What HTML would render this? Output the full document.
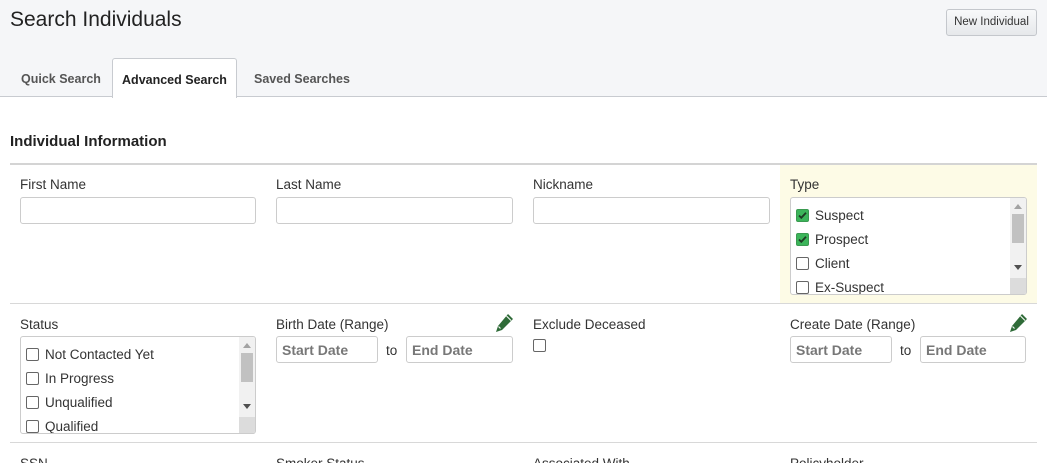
<!DOCTYPE html>
<html><head><meta charset="utf-8"><style>
*{box-sizing:border-box;margin:0;padding:0}
html,body{width:1047px;height:463px;overflow:hidden}
body{background:#fff;font-family:"Liberation Sans",sans-serif;color:#222;position:relative}
.a{position:absolute}
.hdr{left:0;top:0;width:1047px;height:97px;background:#f5f6f8;border-bottom:1px solid #c8cbd0}
h1{position:absolute;left:10px;top:8px;font-size:21px;font-weight:normal;color:#222}
.btn{left:946px;top:9px;width:91px;height:27px;border:1px solid #c4c7cc;border-radius:3px;background:linear-gradient(#f8f9fa,#e6e8eb);font-size:11.5px;color:#333;text-align:center;line-height:25px}
.tab{top:58px;height:40px;font-size:12.5px;font-weight:bold;color:#555;line-height:42px}
.tab.act{background:#fff;border:1px solid #c8cbd0;border-bottom:none;border-radius:3px 3px 0 0;color:#222;text-align:center}
.sec{left:10px;top:133px;font-size:15px;font-weight:bold;color:#222}
.line{left:10px;width:1027px;height:2px;background:#d4d4d4}
.lbl{font-size:13.5px;color:#333}
.inp{height:27px;border:1px solid #ccc;border-radius:3px;background:#fff}
.ph{font-size:14px;font-weight:bold;color:#777;padding:5px 0 0 5px}
.list{border:1px solid #ccc;border-radius:3px;background:#fff;overflow:hidden}
.item{position:absolute;left:5px;font-size:13.5px;color:#333;white-space:nowrap}
.cb{display:inline-block;width:13px;height:13px;border:1px solid #666;border-radius:2px;background:#fff;vertical-align:-2px;margin-right:6px}
.cb.on{background:#3cb55a;border-color:#3a9a50;position:relative}
.sb{position:absolute;right:0;top:0;width:16px;height:100%;background:#f1f1f1}
.thumb{position:absolute;right:2px;width:12px;height:29px;background:#c1c1c1}
.to{font-size:13.5px;color:#333}
</style></head><body>
<div class="a hdr"></div>
<h1>Search Individuals</h1>
<div class="a btn">New Individual</div>
<div class="a tab" style="left:21px">Quick Search</div>
<div class="a tab act" style="left:112px;width:125px">Advanced Search</div>
<div class="a tab" style="left:254px">Saved Searches</div>

<div class="a sec">Individual Information</div>
<div class="a line" style="top:163px"></div>
<div class="a" style="left:780px;top:165px;width:257px;height:138px;background:#fdfbe6"></div>
<div class="a line" style="top:303px;height:1px;background:#d8d8d8"></div>
<div class="a line" style="top:442px;height:1px;background:#d8d8d8"></div>

<div class="a lbl" style="left:20px;top:177px">First Name</div>
<div class="a inp" style="left:20px;top:197px;width:236px"></div>
<div class="a lbl" style="left:276px;top:177px">Last Name</div>
<div class="a inp" style="left:276px;top:197px;width:237px"></div>
<div class="a lbl" style="left:533px;top:177px">Nickname</div>
<div class="a inp" style="left:533px;top:197px;width:237px"></div>
<div class="a lbl" style="left:790px;top:177px">Type</div>
<div class="a list" style="left:790px;top:197px;width:237px;height:98px">
 <div class="item" style="top:10px"><span class="cb on"><svg width="11" height="11" viewBox="0 0 11 11" style="position:absolute;left:0;top:0"><path d="M2 5.5l2.3 2.3L9 2.8" stroke="#1e3a24" stroke-width="1.8" fill="none"/></svg></span>Suspect</div>
 <div class="item" style="top:34px"><span class="cb on"><svg width="11" height="11" viewBox="0 0 11 11" style="position:absolute;left:0;top:0"><path d="M2 5.5l2.3 2.3L9 2.8" stroke="#1e3a24" stroke-width="1.8" fill="none"/></svg></span>Prospect</div>
 <div class="item" style="top:58px"><span class="cb"></span>Client</div>
 <div class="item" style="top:82px"><span class="cb"></span>Ex-Suspect</div>
 <div class="sb"><svg class="a" style="left:4px;top:6px" width="8" height="5"><path d="M0 5L4 0 8 5z" fill="#a3a3a3"/></svg><div class="thumb" style="top:16px"></div><svg class="a" style="left:4px;top:67px" width="8" height="5"><path d="M0 0L4 5 8 0z" fill="#505050"/></svg><div class="a" style="left:0;bottom:0;width:16px;height:16px;background:#dcdcdc"></div></div>
</div>

<div class="a lbl" style="left:20px;top:317px">Status</div>
<div class="a list" style="left:20px;top:336px;width:236px;height:98px">
 <div class="item" style="top:10px"><span class="cb"></span>Not Contacted Yet</div>
 <div class="item" style="top:34px"><span class="cb"></span>In Progress</div>
 <div class="item" style="top:58px"><span class="cb"></span>Unqualified</div>
 <div class="item" style="top:82px"><span class="cb"></span>Qualified</div>
 <div class="sb"><svg class="a" style="left:4px;top:6px" width="8" height="5"><path d="M0 5L4 0 8 5z" fill="#a3a3a3"/></svg><div class="thumb" style="top:16px"></div><svg class="a" style="left:4px;top:67px" width="8" height="5"><path d="M0 0L4 5 8 0z" fill="#505050"/></svg><div class="a" style="left:0;bottom:0;width:16px;height:16px;background:#dcdcdc"></div></div>
</div>

<div class="a lbl" style="left:276px;top:317px">Birth Date (Range)</div>
<svg class="a" style="left:494px;top:313px" width="20" height="20" viewBox="0 0 20 20"><path d="M14 1l5 5-11 11-6 2 2-6z" fill="#2f6b38"/><path d="M4.5 13.5l2 2" stroke="#f5f5f5" stroke-width="1.2"/><path d="M12.5 3l4.5 4.5" stroke="#fff" stroke-width="1"/></svg>
<div class="a inp ph" style="left:276px;top:336px;width:102px">Start Date</div>
<div class="a to" style="left:386px;top:343px">to</div>
<div class="a inp ph" style="left:406px;top:336px;width:107px">End Date</div>

<div class="a lbl" style="left:533px;top:317px">Exclude Deceased</div>
<span class="a cb" style="left:533px;top:339px"></span>

<div class="a lbl" style="left:790px;top:317px">Create Date (Range)</div>
<svg class="a" style="left:1008px;top:313px" width="20" height="20" viewBox="0 0 20 20"><path d="M14 1l5 5-11 11-6 2 2-6z" fill="#2f6b38"/><path d="M4.5 13.5l2 2" stroke="#f5f5f5" stroke-width="1.2"/><path d="M12.5 3l4.5 4.5" stroke="#fff" stroke-width="1"/></svg>
<div class="a inp ph" style="left:790px;top:336px;width:102px">Start Date</div>
<div class="a to" style="left:900px;top:343px">to</div>
<div class="a inp ph" style="left:920px;top:336px;width:106px">End Date</div>

<div class="a lbl" style="left:20px;top:456px">SSN</div>
<div class="a lbl" style="left:276px;top:456px">Smoker Status</div>
<div class="a lbl" style="left:533px;top:456px">Associated With</div>
<div class="a lbl" style="left:790px;top:456px">Policyholder</div>
</body></html>
